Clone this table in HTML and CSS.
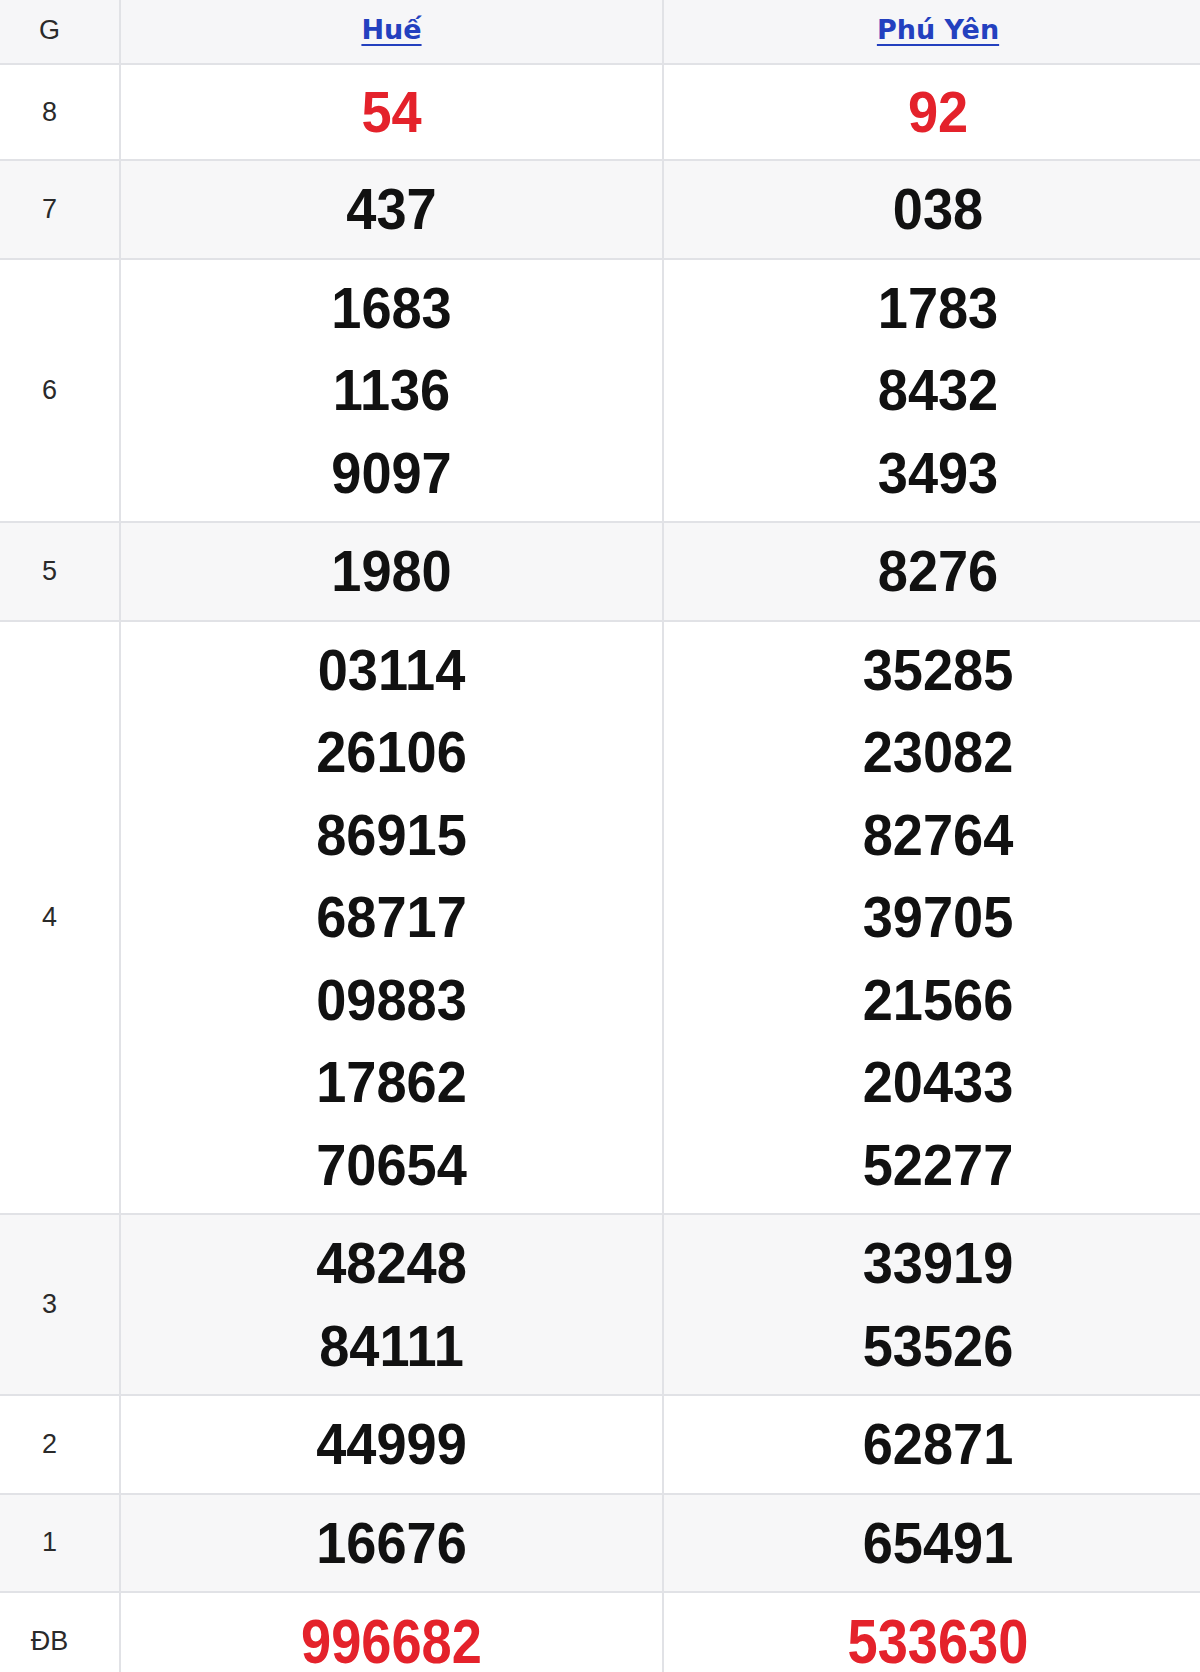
FILE: index.html
```html
<!DOCTYPE html>
<html lang="vi">
<head>
<meta charset="utf-8">
<title>Kết quả xổ số</title>
<link rel="stylesheet" href="styles.css">
</head>
<body>
<div class="wrap">
<table class="kq">
  <colgroup><col class="c-g"><col class="c-p"><col class="c-p2"></colgroup>
  <thead>
    <tr class="hd">
      <th class="lbl">G</th>
      <th><a href="#">Huế</a></th>
      <th><a href="#">Phú Yên</a></th>
    </tr>
  </thead>
  <tbody>
    <tr class="r8">
      <td class="lbl">8</td>
      <td><div class="n red">54</div></td>
      <td><div class="n red">92</div></td>
    </tr>
    <tr>
      <td class="lbl">7</td>
      <td><div class="n">437</div></td>
      <td><div class="n">038</div></td>
    </tr>
    <tr>
      <td class="lbl">6</td>
      <td><div class="n">1683</div><div class="n">1136</div><div class="n">9097</div></td>
      <td><div class="n">1783</div><div class="n">8432</div><div class="n">3493</div></td>
    </tr>
    <tr>
      <td class="lbl">5</td>
      <td><div class="n">1980</div></td>
      <td><div class="n">8276</div></td>
    </tr>
    <tr>
      <td class="lbl">4</td>
      <td>
        <div class="n">03114</div><div class="n">26106</div><div class="n">86915</div><div class="n">68717</div><div class="n">09883</div><div class="n">17862</div><div class="n">70654</div>
      </td>
      <td>
        <div class="n">35285</div><div class="n">23082</div><div class="n">82764</div><div class="n">39705</div><div class="n">21566</div><div class="n">20433</div><div class="n">52277</div>
      </td>
    </tr>
    <tr>
      <td class="lbl">3</td>
      <td><div class="n">48248</div><div class="n">84111</div></td>
      <td><div class="n">33919</div><div class="n">53526</div></td>
    </tr>
    <tr>
      <td class="lbl">2</td>
      <td><div class="n">44999</div></td>
      <td><div class="n">62871</div></td>
    </tr>
    <tr>
      <td class="lbl">1</td>
      <td><div class="n">16676</div></td>
      <td><div class="n">65491</div></td>
    </tr>
    <tr class="db">
      <td class="lbl">ĐB</td>
      <td><div class="n red big">996682</div></td>
      <td><div class="n red big">533630</div></td>
    </tr>
  </tbody>
</table>
</div>
</body>
</html>
```
FILE: styles.css
```css
html, body {
  margin: 0;
  padding: 0;
  background: #ffffff;
}

body {
  font-family: "Liberation Sans", Arial, sans-serif;
  color: #111;
}

.wrap {
  width: 1200px;
  overflow: hidden;
}

.kq {
  width: 1212px;
  border-collapse: collapse;
  table-layout: fixed;
  border-style: hidden;
}

.c-g { width: 120px; }
.c-p { width: 543px; }

.kq th,
.kq td {
  border: 2px solid #e1e2e6;
  text-align: center;
  vertical-align: middle;
  padding: 7px 0;
}

.kq thead tr {
  background: #f6f6f8;
}

.kq tbody tr:nth-child(even) {
  background: #f7f7f8;
}

.kq th {
  font-family: "DejaVu Sans", "Liberation Sans", sans-serif;
  font-weight: bold;
  font-size: 27px;
  line-height: 48px;
  padding: 6px 0 9px;
}

.kq th a {
  color: #2340bf;
  text-decoration: underline;
  text-decoration-thickness: 2px;
  text-underline-offset: 5px;
}

.kq .lbl {
  font-family: "Liberation Sans", Arial, sans-serif;
  font-weight: normal;
  font-size: 27px;
  color: #2a2a2a;
  padding-right: 20px;
}

.kq th.lbl {
  font-size: 27px;
}

.n {
  font-weight: bold;
  font-size: 57px;
  line-height: 82.5px;
  color: #111;
  transform: scaleX(0.95);
}

.r8 .n {
  line-height: 80px;
}

.n.red {
  color: #e4222b;
}

.n.big {
  font-size: 63px;
  transform: scaleX(0.86);
}
```
